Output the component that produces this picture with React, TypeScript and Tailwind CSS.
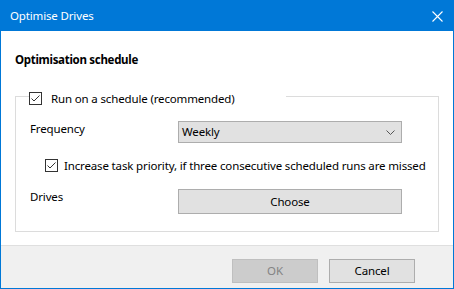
import React from 'react'

const font = { fontFamily: '"Noto Sans", "Open Sans", sans-serif' }

function CheckBox() {
  return (
    <span className="flex h-[13px] w-[13px] shrink-0 items-center justify-center border border-[#333333] bg-white">
      <svg width="11" height="11" viewBox="0 0 11 11">
        <polyline points="1.5,5.5 4,8 9.5,2.5" fill="none" stroke="#333333" strokeWidth="1" />
      </svg>
    </span>
  )
}

function WinButton({ label, disabled }: { label: string; disabled?: boolean }) {
  return (
    <button
      type="button"
      className={
        disabled
          ? 'flex h-[24px] w-[86px] items-center justify-center border border-[#bfbfbf] bg-[#cccccc] text-[#838383]'
          : 'flex h-[24px] w-[86px] items-center justify-center border border-[#adadad] bg-[#e1e1e1] text-black'
      }
    >
      {label}
    </button>
  )
}

export default function App() {
  return (
    <div
      className="flex h-[289px] w-[454px] flex-col border border-[#0078d7] bg-white text-[11.5px] leading-[16px] tracking-[-0.15px] text-black"
      style={font}
    >
      <div className="flex h-[30px] shrink-0 items-center justify-between bg-[#0078d7] pl-[9px] pr-[10px] text-white">
        <span>Optimise Drives</span>
        <svg width="11" height="11" viewBox="0 0 11 11">
          <path d="M0.5 0.5 L10.5 10.5 M10.5 0.5 L0.5 10.5" stroke="white" strokeWidth="1.1" />
        </svg>
      </div>

      <div className="flex-1 px-[14px] pt-[21px]">
        <h2 className="font-bold tracking-[-0.3px]">Optimisation schedule</h2>

        <div className="mt-[24px]">
          <div className="flex h-[13px]">
            <div className="mt-[4px] w-[14px] border-l border-t border-[#dcdcdc]" />
            <label className="flex w-[257px] items-center">
              <CheckBox />
              <span className="ml-[9px] whitespace-nowrap">Run on a schedule (recommended)</span>
            </label>
            <div className="mt-[4px] flex-1 border-r border-t border-[#dcdcdc]" />
          </div>

          <div className="border-x border-b border-[#dcdcdc] pb-[17px] pl-[14px] pt-[16px]">
            <div className="flex items-start">
              <span className="w-[148px]">Frequency</span>
              <div className="flex h-[22px] w-[224px] items-center justify-between border border-[#adadad] bg-[#e1e1e1] pl-[3px] pr-[6px]">
                <span>Weekly</span>
                <svg width="9" height="5" viewBox="0 0 9 5">
                  <polyline points="0.5,0.5 4.5,4.5 8.5,0.5" fill="none" stroke="#555555" strokeWidth="1" />
                </svg>
              </div>
            </div>

            <label className="mt-[16px] flex h-[13px] items-center pl-[15px]">
              <CheckBox />
              <span className="ml-[6px] whitespace-nowrap">
                Increase task priority, if three consecutive scheduled runs are missed
              </span>
            </label>

            <div className="mt-[17px] flex items-start">
              <span className="w-[148px]">Drives</span>
              <button
                type="button"
                className="flex h-[25px] w-[224px] items-center justify-center border border-[#adadad] bg-[#e1e1e1]"
              >
                Choose
              </button>
            </div>
          </div>
        </div>
      </div>

      <div className="flex h-[43px] shrink-0 justify-end gap-[11px] border-t border-[#dfdfdf] bg-[#f0f0f0] pr-[38px] pt-[13px]">
        <WinButton label="OK" disabled />
        <WinButton label="Cancel" />
      </div>
    </div>
  )
}
